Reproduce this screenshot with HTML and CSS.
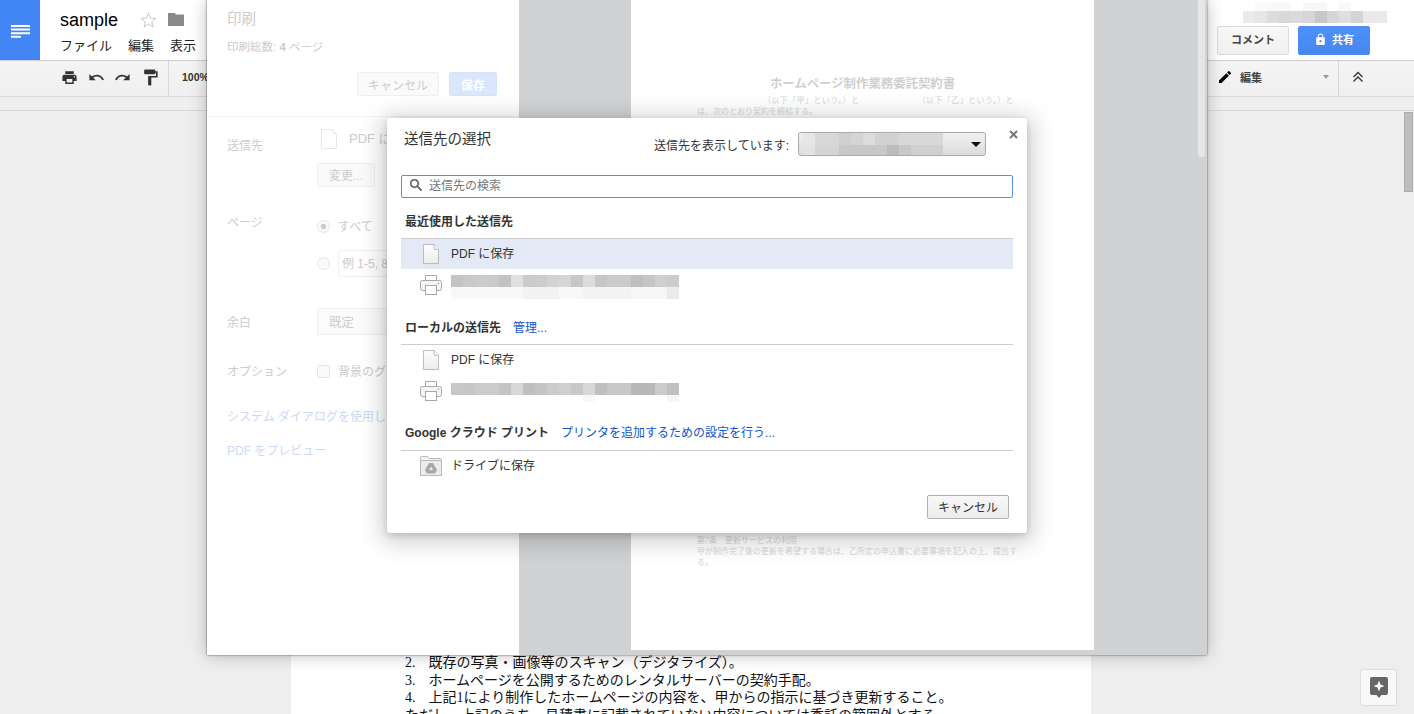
FILE: index.html
```html
<!DOCTYPE html>
<html lang="ja">
<head>
<meta charset="utf-8">
<title>sample</title>
<link rel="stylesheet" href="styles.css">
</head>
<body>
<div class="app">
  <header class="topbar">
    <div class="logo"><svg width="19" height="13" viewBox="0 0 19 13"><path d="M0 0h19v2H0zM0 3.600h19v2H0zM0 7.200h19v2H0zM0 10.800h10v2H0z" fill="#fff"/></svg></div>
    <div class="titleblock">
      <div class="titlerow">
        <span class="docname">sample</span>
        <svg class="star" width="17" height="16" viewBox="0 0 17 16"><path d="M8.500 1.200l2 4.900 5.300.4-4.100 3.400 1.300 5.100-4.500-2.800L4 15l1.300-5.100L1.200 6.500l5.300-.4z" fill="none" stroke="#c8c8c8"/></svg>
        <svg class="folder" width="16" height="13" viewBox="0 0 16 13"><path d="M0 0h6.500l1.500 1.500h8V13H0z" fill="#8a8a8a"/></svg>
      </div>
      <nav class="menu"><span>ファイル</span><span>編集</span><span>表示</span></nav>
    </div>
    <div class="account">
      <div class="mosaic mosaic-account"></div>
      <div class="account-btns">
        <button class="btn-comment">コメント</button>
        <button class="btn-share"><svg width="13" height="13" viewBox="0 0 24 24"><path fill="#fff" d="M18 8h-1V6c0-2.760-2.240-5-5-5S7 3.240 7 6v2H6c-1.100 0-2 .9-2 2v10c0 1.100.9 2 2 2h12c1.100 0 2-.9 2-2V10c0-1.100-.9-2-2-2zm-6 9c-1.100 0-2-.9-2-2s.9-2 2-2 2 .9 2 2-.9 2-2 2zm3.100-9H8.900V6c0-1.710 1.390-3.100 3.100-3.100 1.710 0 3.100 1.390 3.100 3.100v2z"/></svg>共有</button>
      </div>
    </div>
  </header>
  <div class="toolbar">
    <svg class="tool t-print" width="17" height="17" viewBox="0 0 24 24"><path fill="#333" d="M19 8H5c-1.660 0-3 1.340-3 3v6h4v4h12v-4h4v-6c0-1.660-1.340-3-3-3zm-3 11H8v-5h8v5zm3-7c-.55 0-1-.45-1-1s.45-1 1-1 1 .45 1 1-.45 1-1 1zm-1-9H6v4h12V3z"/></svg>
    <svg class="tool" width="17" height="17" viewBox="0 0 24 24"><path fill="#333" d="M12.500 8c-2.650 0-5.050.99-6.900 2.600L2 7v9h9l-3.620-3.620c1.390-1.160 3.160-1.880 5.120-1.880 3.540 0 6.550 2.310 7.600 5.500l2.370-.78C21.080 11.030 17.150 8 12.500 8z"/></svg>
    <svg class="tool" width="17" height="17" viewBox="0 0 24 24"><path fill="#333" d="M18.400 10.600C16.550 8.990 14.150 8 11.500 8c-4.650 0-8.580 3.030-9.960 7.220L3.900 16c1.050-3.190 4.050-5.500 7.600-5.500 1.950 0 3.730.72 5.120 1.880L13 16h9V7l-3.600 3.600z"/></svg>
    <svg class="tool" width="19" height="19" viewBox="0 0 24 24"><path fill="#333" d="M18 4V3c0-.55-.45-1-1-1H5c-.55 0-1 .45-1 1v4c0 .55.45 1 1 1h12c.55 0 1-.45 1-1V6h1v4H9v11c0 .55.45 1 1 1h2c.55 0 1-.45 1-1v-9h8V4h-3z"/></svg>
    <span class="tool-sep"></span>
    <span class="zoomlevel">100%</span>
    <div class="tool-right">
      <svg width="16" height="16" viewBox="0 0 24 24"><path fill="#000" d="M3 17.250V21h3.750L17.810 9.940l-3.750-3.750L3 17.250zM20.710 7.040c.39-.39.39-1.020 0-1.410l-2.340-2.340c-.39-.39-1.020-.39-1.410 0l-1.830 1.830 3.750 3.750 1.830-1.830z"/></svg>
      <span class="mode">編集</span>
      <span class="caret"></span>
      <span class="tool-sep tool-sep-right"></span>
      <svg width="12" height="12" viewBox="0 0 12 12"><path d="M1.500 6L6 1.500 10.500 6M1.500 10.500L6 6l4.500 4.500" fill="none" stroke="#333" stroke-width="1.300"/></svg>
    </div>
  </div>
  <div class="ruler"></div>
  <main class="docarea">
    <article class="page">
      <div class="docline"><span>2.</span><span>既存の写真・画像等のスキャン（デジタライズ）。</span></div>
      <div class="docline"><span>3.</span><span>ホームページを公開するためのレンタルサーバーの契約手配。</span></div>
      <div class="docline"><span>4.</span><span>上記1により制作したホームページの内容を、甲からの指示に基づき更新すること。</span></div>
      <div class="docline docline-plain">ただし、上記のうち、見積書に記載されていない内容については委託の範囲外とする。</div>
    </article>
  </main>
  <div class="doc-scroll"></div>
  <div class="help-btn"><svg width="18" height="21" viewBox="0 0 18 21"><path d="M2 0h14a2 2 0 0 1 2 2v14a2 2 0 0 1-2 2h-4.500L9 21l-2.500-3H2a2 2 0 0 1-2-2V2a2 2 0 0 1 2-2z" fill="#666"/><path d="M9 3.500l1.500 4 4 1.500-4 1.500-1.500 4-1.500-4-4-1.500 4-1.500z" fill="#fff"/></svg></div>
</div>

<section class="print">
  <aside class="print-side">
    <div class="print-head">
      <h1 class="print-title">印刷</h1>
      <p class="print-total">印刷総数: <b>4</b> ページ</p>
      <div class="print-actions">
        <button class="fade-btn fade-cancel">キャンセル</button>
        <button class="fade-save">保存</button>
      </div>
    </div>
    <div class="print-row row-dest">
      <div class="print-label label-dest">送信先</div>
      <div>
        <div class="dest-line">
          <svg width="16" height="20" viewBox="0 0 16 20"><path d="M.5.500h11l4 4v15H.5z" fill="#fff" stroke="#e8e8e8"/><path d="M11.500.500v4h4" fill="none" stroke="#e8e8e8"/></svg>
          <span>PDF に</span>
        </div>
        <button class="fade-btn fade-change">変更...</button>
      </div>
    </div>
    <div class="print-row row-pages">
      <div class="print-label">ページ</div>
      <div>
        <div class="opt opt-all"><span class="radio radio-on"></span><span class="opt-text">すべて</span></div>
        <div class="opt opt-range"><span class="radio"></span><span class="fade-input">例 1-5, 8, 11-13</span></div>
      </div>
    </div>
    <div class="print-row row-margin">
      <div class="print-label label-margin">余白</div>
      <div class="fade-select">既定</div>
    </div>
    <div class="print-row row-options">
      <div class="print-label">オプション</div>
      <div class="opt"><span class="check"></span><span class="opt-text">背景のグラフィック</span></div>
    </div>
    <div class="print-link link-system">システム ダイアログを使用して印刷...</div>
    <div class="print-link link-pdf">PDF をプレビュー</div>
  </aside>
  <div class="preview">
    <div class="sheet">
      <h2 class="sheet-title">ホームページ制作業務委託契約書</h2>
      <p class="sheet-parties"><span>（以下「甲」という。）と</span><span>（以下「乙」という。）と</span></p>
      <p class="sheet-text">は、次のとおり契約を締結する。</p>
      <p class="sheet-text sheet-foot">第7条　更新サービスの利用<br>甲が制作完了後の更新を希望する場合は、乙所定の申込書に必要事項を記入の上、提出する。</p>
    </div>
    <div class="preview-scroll"></div>
  </div>
</section>

<section class="dialog">
  <div class="dlg-head">
    <h2 class="dlg-title">送信先の選択</h2>
    <div class="dlg-showing">
      <span>送信先を表示しています:</span>
      <div class="dlg-select"><div class="mosaic mosaic-select"></div><span class="dlg-arrow"></span></div>
    </div>
  </div>
  <svg class="dlg-close" width="9" height="9" viewBox="0 0 9 9"><path d="M1 1l7 7M8 1L1 8" stroke="#777" stroke-width="2"/></svg>
  <div class="dlg-search">
    <svg width="12" height="12" viewBox="3 3 17.500 17.500"><path fill="#666" stroke="#666" stroke-width=".8" d="M15.500 14h-.79l-.28-.27C15.410 12.590 16 11.110 16 9.500 16 5.910 13.090 3 9.500 3S3 5.910 3 9.500 5.910 16 9.500 16c1.610 0 3.090-.59 4.230-1.570l.27.28v.79l5 4.990L20.490 19l-4.990-5zm-6 0C7.010 14 5 11.990 5 9.500S7.010 5 9.500 5 14 7.010 14 9.500 11.990 14 9.500 14z"/></svg>
    <span>送信先の検索</span>
  </div>

  <div class="dlg-section dlg-section-first"><b>最近使用した送信先</b></div>
  <div class="dlg-list">
    <div class="dest dest-selected">
      <span class="dest-icon dest-icon-doc"><svg width="16" height="21" viewBox="0 0 18 22" preserveAspectRatio="none"><use href="#icon-doc"/></svg></span>
      <span class="dest-text">PDF に保存</span>
    </div>
    <div class="dest dest-printer">
      <span class="dest-icon"><svg width="22" height="20" viewBox="0 0 22 20"><use href="#icon-printer"/></svg></span>
      <div class="mosaic mosaic-recent"></div>
    </div>
  </div>

  <div class="dlg-section"><b>ローカルの送信先</b><a class="dlg-link">管理...</a></div>
  <div class="dlg-list">
    <div class="dest">
      <span class="dest-icon dest-icon-doc"><svg width="16" height="21" viewBox="0 0 18 22" preserveAspectRatio="none"><use href="#icon-doc"/></svg></span>
      <span class="dest-text">PDF に保存</span>
    </div>
    <div class="dest dest-printer">
      <span class="dest-icon"><svg width="22" height="20" viewBox="0 0 22 20"><use href="#icon-printer"/></svg></span>
      <div class="mosaic mosaic-local"></div>
    </div>
  </div>

  <div class="dlg-section dlg-section-last"><b>Google クラウド プリント</b><a class="dlg-link">プリンタを追加するための設定を行う...</a></div>
  <div class="dlg-list">
    <div class="dest">
      <span class="dest-icon"><svg width="22" height="20" viewBox="0 0 22 20"><path d="M.5 19.500V1.500a1 1 0 0 1 1-1h6l2 2h11a1 1 0 0 1 1 1v16z" fill="#f2f2f2" stroke="#b8b8b8"/><path d="M.5 4.500h21v15H.5z" fill="#ececec" stroke="#b8b8b8"/><path d="M9 7h4l4 7-2 3.500H7L5 14z" fill="#a8a8a8"/><path d="M11 10.500L9 14h4z" fill="#ececec"/></svg></span>
      <span class="dest-text">ドライブに保存</span>
    </div>
  </div>

  <div class="dlg-foot"><button class="dlg-cancel">キャンセル</button></div>
</section>

<svg class="defs" width="0" height="0">
  <defs>
    <linearGradient id="paper" x1="0" y1="0" x2="0" y2="1"><stop offset="0" stop-color="#fdfdfd"/><stop offset="1" stop-color="#ececec"/></linearGradient>
    <g id="icon-doc"><path d="M.5.500h12l5 5v15H.5z" fill="url(#paper)" stroke="#b5b5b5"/><path d="M12.500.500v5h5" fill="#fff" stroke="#b5b5b5"/></g>
    <g id="icon-printer"><path d="M5.500 5.500v-5h11v5" fill="#fff" stroke="#a8a8a8"/><rect x=".5" y="5.500" width="21" height="10" rx="2" fill="#f6f6f6" stroke="#a8a8a8"/><rect x="5.500" y="10.500" width="11" height="9" fill="#fff" stroke="#a8a8a8"/><rect x="17.500" y="7.500" width="2" height="1.500" fill="#bbb"/></g>
  </defs>
</svg>
</body>
</html>
```

FILE: styles.css
```css
* { box-sizing: border-box; }
html, body { margin: 0; height: 714px; overflow: hidden; }
body {
  position: relative;
  font-family: "Liberation Sans", "Noto Sans CJK JP", sans-serif;
  font-size: 12px;
  color: #333;
  background: #eee;
}
button { font-family: inherit; margin: 0; padding: 0; }
h1, h2, p { margin: 0; font-weight: normal; }
.defs { position: absolute; }

/* Docs page underneath */
.app { height: 714px; display: flex; flex-direction: column; }
.topbar { height: 61px; flex: none; display: flex; background: #fff; border-bottom: 1px solid #d0d0d0; }
.logo { width: 40px; height: 60px; background: #4285f4; display: flex; align-items: center; justify-content: center; padding-top: 2px; }
.titleblock { margin-left: 20px; }
.titlerow { height: 34px; padding-top: 5px; display: flex; align-items: center; }
.docname { font-size: 18px; line-height: 22px; color: #000; width: 80px; }
.star { margin-right: 11px; }
.menu { display: flex; gap: 16px; font-size: 13px; line-height: 20px; color: #222; margin-top: 2px; }
.account { margin-left: auto; width: 197px; padding-top: 3px; }
.account-btns { display: flex; gap: 9px; margin-top: 3px; }
.btn-comment, .btn-share { width: 72px; height: 29px; border-radius: 2px; font-size: 11px; font-weight: bold; padding-bottom: 3px; }
.btn-comment { border: 1px solid #dcdcdc; background: linear-gradient(#f8f8f8, #f1f1f1); color: #444; }
.btn-share { border: 1px solid #4a8cf0; background: linear-gradient(#4d90fe, #4787ed); color: #fff; display: flex; align-items: center; justify-content: center; gap: 5px; }

.mosaic { background-repeat: no-repeat; }
.mosaic-account {
  width: 144px; height: 20px; margin-left: 26px;
  background-image:
    linear-gradient(90deg, #fafafa 0 12px, #f8f8f8 12px 36px, #fff 36px 48px, #f7f7f7 48px 72px, #fff 72px 84px, #f8f8f8 84px 96px, #fff 96px),
    linear-gradient(90deg, #ece9ea 0 12px, #e6e6e6 12px 24px, #dcdcdc 24px 36px, #d8d8d8 36px 48px, #dadada 48px 60px, #d6d6d6 60px 72px, #c8c8c8 72px 84px, #d6d6d6 84px 96px, #dfdfdf 96px 108px, #d4d4d4 108px 120px, #ece8ea 120px 132px, #eaeaea 132px);
  background-size: 144px 8px, 144px 12px;
  background-position: 12px 0, 0 8px;
}

.toolbar {
  height: 36px; flex: none; display: flex; align-items: center; padding: 0 0 3px 61px;
  background: linear-gradient(#f4f4f4, #f0f0f0); border-bottom: 1px solid #d8d8d8;
}
.tool { margin-right: 9.500px; }
.tool-sep { width: 1px; height: 35px; background: #d8d8d8; margin: 3px 0 0 -1px; }
.zoomlevel { margin-left: 13px; font-size: 10.500px; font-weight: bold; color: #333; }
.tool-right { margin-left: auto; width: 197px; display: flex; align-items: center; font-size: 11px; font-weight: bold; color: #444; }
.mode { margin-left: 7px; width: 83px; }
.caret { width: 0; height: 0; border: 3px solid transparent; border-top: 4px solid #999; border-bottom: 0; }
.tool-sep-right { margin-left: 9px; margin-right: 13px; }

.ruler { height: 14px; flex: none; background: #eee; border-bottom: 1px solid #d8d8d8; }
.docarea { flex: 1; overflow: hidden; background: #eee; }
.page { width: 800px; margin-left: 291px; background: #fff; padding: 543px 0 0 114px; height: 800px; font-family: "Liberation Serif", "Noto Sans CJK JP", serif; font-size: 14px; line-height: 17.500px; color: #111; }
.docline { display: flex; gap: 13px; }
.docline-plain { display: block; }
.doc-scroll { position: absolute; left: 1404px; top: 112px; width: 9px; height: 80px; background: #bdbdbd; border: 1px solid #adadad; }
.help-btn { position: absolute; left: 1360px; top: 669px; width: 37px; height: 37px; border: 1px solid #ddd; border-radius: 3px; background: #f8f8f8; display: flex; align-items: center; justify-content: center; }

/* Print overlay */
.print {
  position: absolute; left: 207px; top: 0; width: 1000px; height: 655px; display: flex;
  background: #fff; box-shadow: 0 0 16px rgba(0,0,0,.25), 0 0 2px rgba(0,0,0,.6);
}
.print-side { width: 312px; flex: none; overflow: hidden; color: #ccc; font-size: 12px; white-space: nowrap; }
.print-head { height: 117px; padding: 10px 22px 0 20px; border-bottom: 1px solid #f4f4f4; }
.print-title { font-size: 14.500px; line-height: 18px; }
.print-total { margin-top: 10px; line-height: 18px; font-size: 11.500px; }
.print-actions { display: flex; justify-content: flex-end; gap: 10px; margin-top: 16px; }
.fade-btn { background: #fafafa; border: 1px solid #efefef; border-radius: 2px; color: #ccc; font-size: 12px; height: 24px; }
.fade-cancel { width: 82px; }
.fade-save { width: 48px; height: 24px; border: 1px solid #d5e3fa; border-radius: 2px; background: #d9e6fb; color: #fff; font-weight: bold; font-size: 12px; }
.print-row { display: grid; grid-template-columns: 90px 1fr; padding-left: 20px; line-height: 18px; }
.print-label { padding-top: 1px; height: 18px; box-sizing: content-box; line-height: 18px; }
.row-dest { margin-top: 12px; }
.print-label.label-dest { padding-top: 8px; }
.dest-line { display: flex; align-items: center; height: 20px; padding-left: 4px; gap: 12px; font-size: 13px; }
.fade-change { width: 58px; margin-top: 14px; padding-bottom: 2px; }
.row-pages { margin-top: 26px; }
.opt { display: flex; align-items: center; gap: 8px; height: 18px; }
.opt-text { padding-top: 2px; }
.opt-all { margin-top: 4px; }
.opt-range { margin-top: 15px; height: 27px; }
.radio, .check { width: 13px; height: 13px; flex: none; background: #fafafa; border: 1px solid #e6e6e6; border-radius: 50%; }
.radio-on { background: radial-gradient(circle, #ccc 0 2.500px, #fafafa 3px); }
.check { border-radius: 2px; }
.fade-input { height: 27px; width: 170px; border: 1px solid #f0f0f0; border-radius: 2px; padding: 4px 3px; }
.row-margin { margin-top: 31px; }
.print-label.label-margin { padding-top: 6px; }
.fade-select { width: 150px; height: 27px; border: 1px solid #efefef; border-radius: 2px; background: #fbfbfb; padding: 5px 11px 0; font-size: 12.500px; }
.row-options { margin-top: 27px; }
.print-link { padding-left: 20px; line-height: 18px; color: #cbd9f3; }
.link-system { margin-top: 27px; }
.link-pdf { margin-top: 16px; }

.preview { flex: 1; background: #d1d2d4; padding-left: 112px; position: relative; overflow: hidden; }
.sheet {
  width: 463px; height: 650px; background: #fff; padding: 75px 66px 0;
  font-family: "Liberation Serif", "Noto Sans CJK JP", serif; color: #d6d6d6;
}
.sheet-title { font-size: 12.400px; line-height: 18px; font-weight: bold; text-align: center; color: #cfcfcf; }
.sheet-parties { display: flex; justify-content: space-between; padding: 0 14px 0 66px; margin-top: 2px; font-size: 8px; line-height: 11px; letter-spacing: .4px; }
.sheet-text { font-size: 8px; line-height: 11px; color: #d6d6d6; }
.sheet-foot { margin-top: 418px; }
.preview-scroll { position: absolute; right: 2px; top: 0; width: 7px; height: 157px; background: #e6e6e6; border-radius: 0 0 3px 3px; }

/* Destination dialog */
.dialog {
  position: absolute; left: 387px; top: 118px; width: 640px; height: 415px; padding: 0 14px;
  display: flex; flex-direction: column;
  background: #fff; border-radius: 3px;
  box-shadow: 0 4px 23px 5px rgba(0,0,0,.2), 0 2px 6px rgba(0,0,0,.15);
}
.dlg-head { height: 57px; flex: none; display: flex; justify-content: space-between; padding: 12px 27px 0 3px; }
.dlg-title { font-size: 14.500px; line-height: 18px; color: #333; }
.dlg-showing { display: flex; gap: 9px; align-items: center; height: 24px; margin-top: 2px; }
.dlg-select { width: 188px; height: 24px; border: 1px solid #aaa; border-radius: 3px; background: linear-gradient(#f0f0f0, #dcdcdc); position: relative; overflow: hidden; }
.mosaic-select {
  width: 150px; height: 22px; margin-left: 4px;
  background-image:
    linear-gradient(90deg, #e6e6e6 0 12px, #d8d8d8 12px 36px, #cfcfcf 36px 48px, #d4d4d4 48px 60px, #dcdcdc 60px 72px, #d2d2d2 72px 96px, #d8d8d8 96px 140px, transparent 140px),
    linear-gradient(90deg, #e2e2e2 0 12px, #d4d4d4 12px 36px, #c8c8c8 36px 84px, #bcbcbc 84px 96px, #c8c8c8 96px 108px, #d0d0d0 108px 140px, transparent 140px);
  background-size: 150px 12px, 150px 12px;
  background-position: 0 0, 0 11px;
}
.dlg-arrow { position: absolute; right: 4px; top: 9px; width: 0; height: 0; border: 5px solid transparent; border-top: 5px solid #111; border-bottom: 0; }
.dlg-close { position: absolute; left: 622px; top: 12px; }
.dlg-search { height: 23px; flex: none; display: flex; align-items: center; gap: 7px; padding: 0 0 4px 8px; border: 1px solid #4d90fe; border-radius: 2px; color: #777; }
.dlg-section { height: 43px; flex: none; display: flex; align-items: flex-end; gap: 12px; padding: 0 0 7px 4px; line-height: 18px; }
.dlg-section b { color: #333; }
.dlg-section-first { height: 40px; }
.dlg-section-last { padding-bottom: 8px; }
.dlg-link { color: #15c; }
.dlg-list { border-top: 1px solid #ccc; flex: none; }
.dest { height: 30px; display: flex; align-items: center; color: #333; }
.dest-selected { background: #e4eaf5; }
.dest-printer { height: 32px; }
.dest-icon { width: 50px; display: flex; justify-content: flex-start; padding-left: 19px; }
.dest-icon-doc { padding-left: 22px; }
.dest-text { padding-bottom: 4px; }
.mosaic-recent, .mosaic-local { width: 228px; height: 24px; }
.mosaic-recent {
  background-image:
    linear-gradient(90deg, #c4c4c4 0 12px, #c9c9c9 12px 24px, #cbcbcb 24px 36px, #cacaca 36px 48px, #c2c2c2 48px 60px, #e0e0e0 60px 72px, #cbcbcb 72px 84px, #cccccc 84px 96px, #d3d3d3 96px 108px, #d6d6d6 108px 120px, #c7c7c7 120px 132px, #dcdcdc 132px 144px, #c6c6c6 144px 156px, #cbcbcb 156px 180px, #bfbfbf 180px 192px, #c6c6c6 192px 204px, #cfcfcf 204px 216px, #cccccc 216px),
    linear-gradient(90deg, #f8f8f8 0 72px, #f2f2f2 72px 108px, #f8f8f8 108px 132px, #f3f3f3 132px 180px, #f6f6f6 180px 216px, #ebebeb 216px);
  background-size: 228px 12px, 228px 12px;
  background-position: 0 0, 0 12px;
  background-repeat: no-repeat;
  margin-top: 4px;
}
.mosaic-local {
  background-image:
    linear-gradient(90deg, #c8c8c8 0 12px, #c6c6c6 12px 24px, #cccccc 24px 48px, #c4c4c4 48px 60px, #d8d8d8 60px 72px, #bfbfbf 72px 84px, #c4c4c4 84px 96px, #cccccc 96px 108px, #d0d0d0 108px 120px, #c8c8c8 120px 132px, #d8d8d8 132px 144px, #bfbfbf 144px 156px, #c8c8c8 156px 180px, #b8b8b8 180px 204px, #cccccc 204px 216px, #c0c0c0 216px),
    linear-gradient(90deg, #fff 0 132px, #f8f8f8 132px 144px, #fff 144px 216px, #f6f6f6 216px);
  background-size: 228px 12px, 228px 7px;
  background-position: 0 0, 0 12px;
  background-repeat: no-repeat;
  margin-top: 8px;
}
.dlg-foot { display: flex; justify-content: flex-end; padding: 14px 4px 0 0; }
.dlg-cancel { width: 82px; height: 24px; border: 1px solid #b0b0b0; border-radius: 2px; background: linear-gradient(#f8f8f8, #ececec); color: #333; font-size: 12px; padding-bottom: 2px; }
```
